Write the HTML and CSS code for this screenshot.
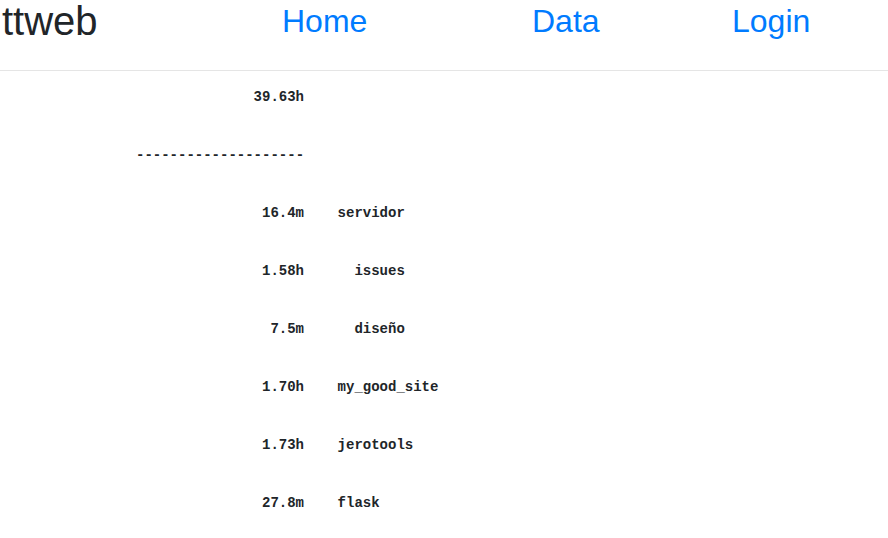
FILE: index.html
```html
<!DOCTYPE html>
<html lang="es">
<head>
<meta charset="utf-8">
<title>ttweb</title>
<link rel="stylesheet" href="styles.css">
</head>
<body>
<header class="topbar">
  <a class="brand" href="#">ttweb</a>
  <a class="nav-link" href="#">Home</a>
  <a class="nav-link" href="#">Data</a>
  <a class="nav-link" href="#">Login</a>
</header>
<main class="report">
  <div class="time">39.63h</div><div class="name"></div>
  <div class="time">--------------------</div><div class="name"></div>
  <div class="time">16.4m</div><div class="name">servidor</div>
  <div class="time">1.58h</div><div class="name">  issues</div>
  <div class="time">7.5m</div><div class="name">  diseño</div>
  <div class="time">1.70h</div><div class="name">my_good_site</div>
  <div class="time">1.73h</div><div class="name">jerotools</div>
  <div class="time">27.8m</div><div class="name">flask</div>
</main>
</body>
</html>
```

FILE: styles.css
```css
html, body {
  margin: 0;
  padding: 0;
  background: #ffffff;
  color: #212529;
  font-family: "Liberation Sans", Arial, sans-serif;
}

.topbar {
  display: grid;
  grid-template-columns: 280px 250px 200px auto;
  align-items: start;
  height: 70px;
  padding-left: 2px;
  border-bottom: 1px solid #e5e5e5;
}

.brand {
  color: #212529;
  text-decoration: none;
  font-size: 40px;
  line-height: 40px;
  padding-top: 1px;
}

.nav-link {
  color: #007bff;
  text-decoration: none;
  font-size: 32px;
  line-height: 32px;
  padding-top: 5px;
}

.report {
  display: grid;
  grid-template-columns: 168px auto;
  column-gap: 33.6px;
  row-gap: 37px;
  padding: 16px 0 0 136px;
  font-family: "Liberation Mono", "Courier New", monospace;
  font-weight: bold;
  font-size: 14px;
  line-height: 21px;
}

.time {
  text-align: right;
  white-space: pre;
}

.name {
  white-space: pre;
}
```
